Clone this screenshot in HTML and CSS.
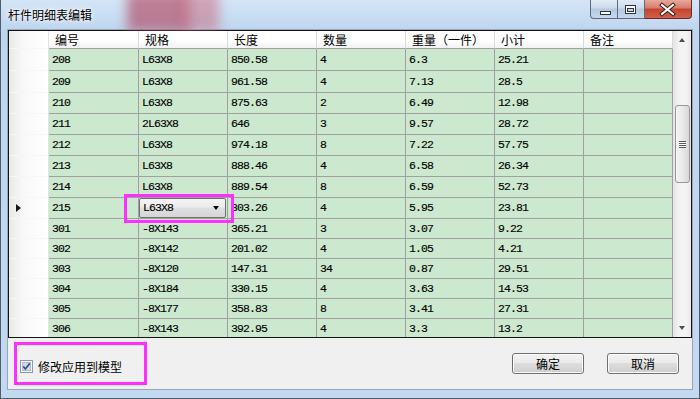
FILE: index.html
```html
<!DOCTYPE html>
<html lang="zh">
  <head>
    <meta charset="utf-8">
    <title>杆件明细表编辑</title>
    <link rel="stylesheet" href="styles.css">
  </head>
  <body>
    <div class="window">
      <div class="titlebar">
        <span class="glow"></span>
        <span class="glow glow--two"></span>
        <span class="title">杆件明细表编辑</span>
        <div class="caption">
          <span class="cap cap--min">
            <svg width="28" height="19" viewBox="0 0 28 19"><rect x="10.5" y="11.5" width="10" height="3" fill="#fff" stroke="#2b3546"/></svg>
          </span>
          <span class="cap cap--max">
            <svg width="27" height="19" viewBox="0 0 27 19"><rect x="8.5" y="5.5" width="10" height="8" fill="#fff" stroke="#2b3546"/><rect x="10.5" y="8.5" width="6" height="3" fill="#c9d6e6" stroke="#2b3546"/></svg>
          </span>
          <span class="cap cap--close">
            <svg width="47" height="19" viewBox="0 0 47 19"><path d="M18 5 L29 14 M29 5 L18 14" stroke="#3a1a16" stroke-width="4" stroke-linecap="square"/><path d="M18 5 L29 14 M29 5 L18 14" stroke="#fff" stroke-width="2" stroke-linecap="square"/></svg>
          </span>
        </div>
      </div>

      <div class="client">
        <div class="grid">
          <div class="grid__body">
            <table class="sheet">
              <colgroup>
                <col class="c-rh"><col class="c-90"><col class="c-89"><col class="c-89"><col class="c-89"><col class="c-89"><col class="c-89"><col class="c-89">
              </colgroup>
              <thead>
                <tr><th class="rh"></th><th>编号</th><th>规格</th><th>长度</th><th>数量</th><th>重量（一件）</th><th>小计</th><th>备注</th></tr>
              </thead>
              <tbody>
                <tr><td class="rh"></td><td>208</td><td>L63X8</td><td>850.58</td><td>4</td><td>6.3</td><td>25.21</td><td></td></tr>
                <tr><td class="rh"></td><td>209</td><td>L63X8</td><td>961.58</td><td>4</td><td>7.13</td><td>28.5</td><td></td></tr>
                <tr><td class="rh"></td><td>210</td><td>L63X8</td><td>875.63</td><td>2</td><td>6.49</td><td>12.98</td><td></td></tr>
                <tr><td class="rh"></td><td>211</td><td>2L63X8</td><td>646</td><td>3</td><td>9.57</td><td>28.72</td><td></td></tr>
                <tr><td class="rh"></td><td>212</td><td>L63X8</td><td>974.18</td><td>8</td><td>7.22</td><td>57.75</td><td></td></tr>
                <tr><td class="rh"></td><td>213</td><td>L63X8</td><td>888.46</td><td>4</td><td>6.58</td><td>26.34</td><td></td></tr>
                <tr><td class="rh"></td><td>214</td><td>L63X8</td><td>889.54</td><td>8</td><td>6.59</td><td>52.73</td><td></td></tr>
                <tr class="is-current">
                  <td class="rh"><span class="row-arrow"></span></td>
                  <td>215</td>
                  <td class="edit-cell">
                    <div class="combo"><span>L63X8</span><span class="combo__arrow"></span></div>
                    <span class="highlight highlight--cell"></span>
                  </td>
                  <td>803.26</td><td>4</td><td>5.95</td><td>23.81</td><td></td>
                </tr>
                <tr><td class="rh"></td><td>301</td><td>-8X143</td><td>365.21</td><td>3</td><td>3.07</td><td>9.22</td><td></td></tr>
                <tr><td class="rh"></td><td>302</td><td>-8X142</td><td>201.02</td><td>4</td><td>1.05</td><td>4.21</td><td></td></tr>
                <tr><td class="rh"></td><td>303</td><td>-8X120</td><td>147.31</td><td>34</td><td>0.87</td><td>29.51</td><td></td></tr>
                <tr><td class="rh"></td><td>304</td><td>-8X184</td><td>330.15</td><td>4</td><td>3.63</td><td>14.53</td><td></td></tr>
                <tr><td class="rh"></td><td>305</td><td>-8X177</td><td>358.83</td><td>8</td><td>3.41</td><td>27.31</td><td></td></tr>
                <tr><td class="rh"></td><td>306</td><td>-8X143</td><td>392.95</td><td>4</td><td>3.3</td><td>13.2</td><td></td></tr>
              </tbody>
            </table>
          </div>

          <div class="vscroll">
            <div class="vscroll__btn"><span class="tri tri--up"></span></div>
            <div class="vscroll__track">
              <div class="vscroll__thumb"><span class="grip"></span></div>
            </div>
            <div class="vscroll__btn"><span class="tri tri--down"></span></div>
          </div>
        </div>

        <div class="footer">
          <label class="apply">
            <svg class="check" width="13" height="13" viewBox="0 0 13 13">
              <rect x="0.5" y="0.5" width="12" height="12" fill="#f4f6f9" stroke="#8e9aa8"/>
              <rect x="2.5" y="2.5" width="8" height="8" fill="#d3dbe7" stroke="#b3bfcf"/>
              <path d="M3.2 6.4 L5.4 9 L9.8 3.4" fill="none" stroke="#34519a" stroke-width="1.7"/>
            </svg>
            <span>修改应用到模型</span>
          </label>
          <div class="actions">
            <button class="btn">确定</button>
            <button class="btn">取消</button>
          </div>
        </div>
      </div>
    </div>
  </body>
</html>
```

FILE: styles.css
```css
html, body {
  margin: 0;
  padding: 0;
  background: #ffffff;
}

body {
  font-family: "Noto Sans CJK SC", "Liberation Sans", sans-serif;
  font-size: 12px;
  color: #000;
}

.window {
  width: 700px;
  height: 399px;
  box-sizing: border-box;
  display: flex;
  flex-direction: column;
  padding: 0 6px 8px;
  background: linear-gradient(#d5e5f7, #c0d6ef 28px, #c3d9f1);
  border: 1px solid #505d6f;
  border-top: 0;
  overflow: hidden;
}

/* title bar */

.titlebar {
  position: relative;
  height: 29px;
  flex: none;
  display: flex;
  justify-content: space-between;
  align-items: flex-start;
  margin: 0 -6px;
  padding: 0 7px 0 7px;
}

.glow {
  position: absolute;
  left: 126px;
  top: -8px;
  width: 62px;
  height: 40px;
  background: rgba(175, 60, 85, 0.6);
  filter: blur(6px);
}

.glow--two {
  left: 180px;
  width: 38px;
  background: rgba(200, 100, 120, 0.5);
}

.title {
  position: relative;
  line-height: 29px;
  font-size: 12px;
  text-shadow: 0 0 6px #fff, 0 0 3px #fff;
}

.caption {
  position: relative;
  display: flex;
}

.cap {
  display: block;
  height: 19px;
  box-sizing: border-box;
  border: 1px solid #5b6b82;
  border-top: 0;
  background: linear-gradient(#e2ebf6, #ccdaea 45%, #b6c9df 50%, #c7d8ec);
}

.cap svg {
  display: block;
  margin-left: -1px;
}

.cap--min {
  width: 28px;
  border-bottom-left-radius: 4px;
}

.cap--max {
  width: 27px;
  border-left: 0;
}

.cap--close {
  width: 47px;
  border-left: 0;
  border-color: #6b2b23;
  border-bottom-right-radius: 4px;
  background: linear-gradient(#e9a99c, #d57b6b 45%, #c2442f 50%, #d1604a);
}

/* client area */

.client {
  flex: 1;
  display: flex;
  flex-direction: column;
  background: #f0f0f0;
  border: 1px solid #98a6b8;
}

.grid {
  height: 308px;
  box-sizing: border-box;
  flex: none;
  display: flex;
  border: 1px solid #141414;
  background: #ffffff;
}

.grid__body {
  position: relative;
  width: 664px;
  overflow: hidden;
}

.sheet {
  width: 664px;
  table-layout: fixed;
  border-collapse: separate;
  border-spacing: 0;
}

.c-rh { width: 40px; }
.c-90 { width: 90px; }
.c-89 { width: 89px; }

.sheet thead tr {
  height: 18px;
}

.sheet th {
  padding: 0 0 0 6px;
  text-align: left;
  font-weight: normal;
  font-size: 12px;
  line-height: 14px;
  background: linear-gradient(#ffffff, #ffffff 55%, #f1f2f4);
  border-right: 1px solid #d9dadc;
  border-bottom: 1px solid #a0a0a0;
  white-space: nowrap;
}

.sheet tbody tr {
  height: 20px;
}

.sheet tbody tr:nth-child(-n+8) {
  height: 21px;
}

.sheet tbody tr:nth-child(-n+2) {
  height: 22px;
}

.sheet td {
  padding: 0 0 0 3px;
  background: #cce8cf;
  border-right: 1px solid #a0a0a0;
  border-bottom: 1px solid #a0a0a0;
  font-family: "Liberation Mono", monospace;
  font-size: 11.5px;
  letter-spacing: -0.9px;
  line-height: 12px;
  -webkit-text-stroke: 0.15px #000;
  white-space: nowrap;
}

.sheet .rh {
  padding: 0;
  background: linear-gradient(to right, #e9e9e9, #f8f8f8 35%, #ffffff);
  border-right: 1px solid #e4e4e4;
  border-bottom: 1px solid #f7f7f7;
}

.sheet td.rh {
  padding-left: 7px;
}

.row-arrow {
  display: inline-block;
  vertical-align: middle;
  border-left: 5px solid #1a1a1a;
  border-top: 4.5px solid transparent;
  border-bottom: 4.5px solid transparent;
}

.sheet td.edit-cell {
  position: relative;
  padding: 0;
}

.combo {
  width: 87px;
  height: 20px;
  box-sizing: border-box;
  display: flex;
  align-items: center;
  justify-content: space-between;
  padding: 0 6px 0 3px;
  border: 1px solid #707070;
  border-radius: 2px;
  background: linear-gradient(#f4f4f4, #ececec 45%, #dfdfdf 50%, #d6d6d6);
}

.combo__arrow {
  border-top: 4px solid #000;
  border-left: 3.5px solid transparent;
  border-right: 3.5px solid transparent;
}

.highlight {
  position: absolute;
  box-sizing: border-box;
  border: 3px solid #ff2eff;
  pointer-events: none;
}

.highlight--cell {
  left: -15px;
  top: -4px;
  width: 110px;
  height: 29px;
}

/* scrollbar */

.vscroll {
  width: 18px;
  display: flex;
  flex-direction: column;
  background: linear-gradient(to right, #e4e4e4, #f3f3f3 35%, #f3f3f3 70%, #e9e9e9);
}

.vscroll__btn {
  height: 18px;
  flex: none;
  display: flex;
  align-items: center;
  justify-content: center;
}

.tri {
  border-left: 3.5px solid transparent;
  border-right: 3.5px solid transparent;
}

.tri--up {
  border-bottom: 4px solid #4d4d4d;
}

.tri--down {
  border-top: 4px solid #4d4d4d;
}

.vscroll__track {
  flex: 1;
}

.vscroll__thumb {
  width: 15px;
  height: 78px;
  box-sizing: border-box;
  margin: 56px 0 0 2px;
  display: flex;
  align-items: center;
  justify-content: center;
  border: 1px solid #979797;
  border-radius: 3px;
  background: linear-gradient(to right, #f5f5f5, #e9e9e9 50%, #d7d7d7);
}

.grip {
  width: 7px;
  height: 7px;
  background: repeating-linear-gradient(#5a5a5a 0 1px, #fdfdfd 1px 2px);
}

/* footer */

.footer {
  flex: 1;
  display: flex;
  align-items: center;
  justify-content: space-between;
  padding: 0 13px 0 6px;
}

.apply {
  width: 133px;
  height: 43px;
  box-sizing: border-box;
  display: flex;
  align-items: center;
  gap: 5px;
  padding: 6px 0 0 3px;
  border: 3px solid #ff2eff;
  font-size: 12px;
}

.check {
  display: block;
  flex: none;
}

.actions {
  display: flex;
  gap: 23px;
}

.btn {
  width: 72px;
  height: 21px;
  padding: 0;
  font-family: "Noto Sans CJK SC", sans-serif;
  font-size: 12px;
  color: #000;
  border: 1px solid #707070;
  border-radius: 3px;
  background: linear-gradient(#f2f2f2, #ebebeb 45%, #dddddd 50%, #cfcfcf);
  box-shadow: inset 0 0 0 1px #fbfbfb;
}
```
